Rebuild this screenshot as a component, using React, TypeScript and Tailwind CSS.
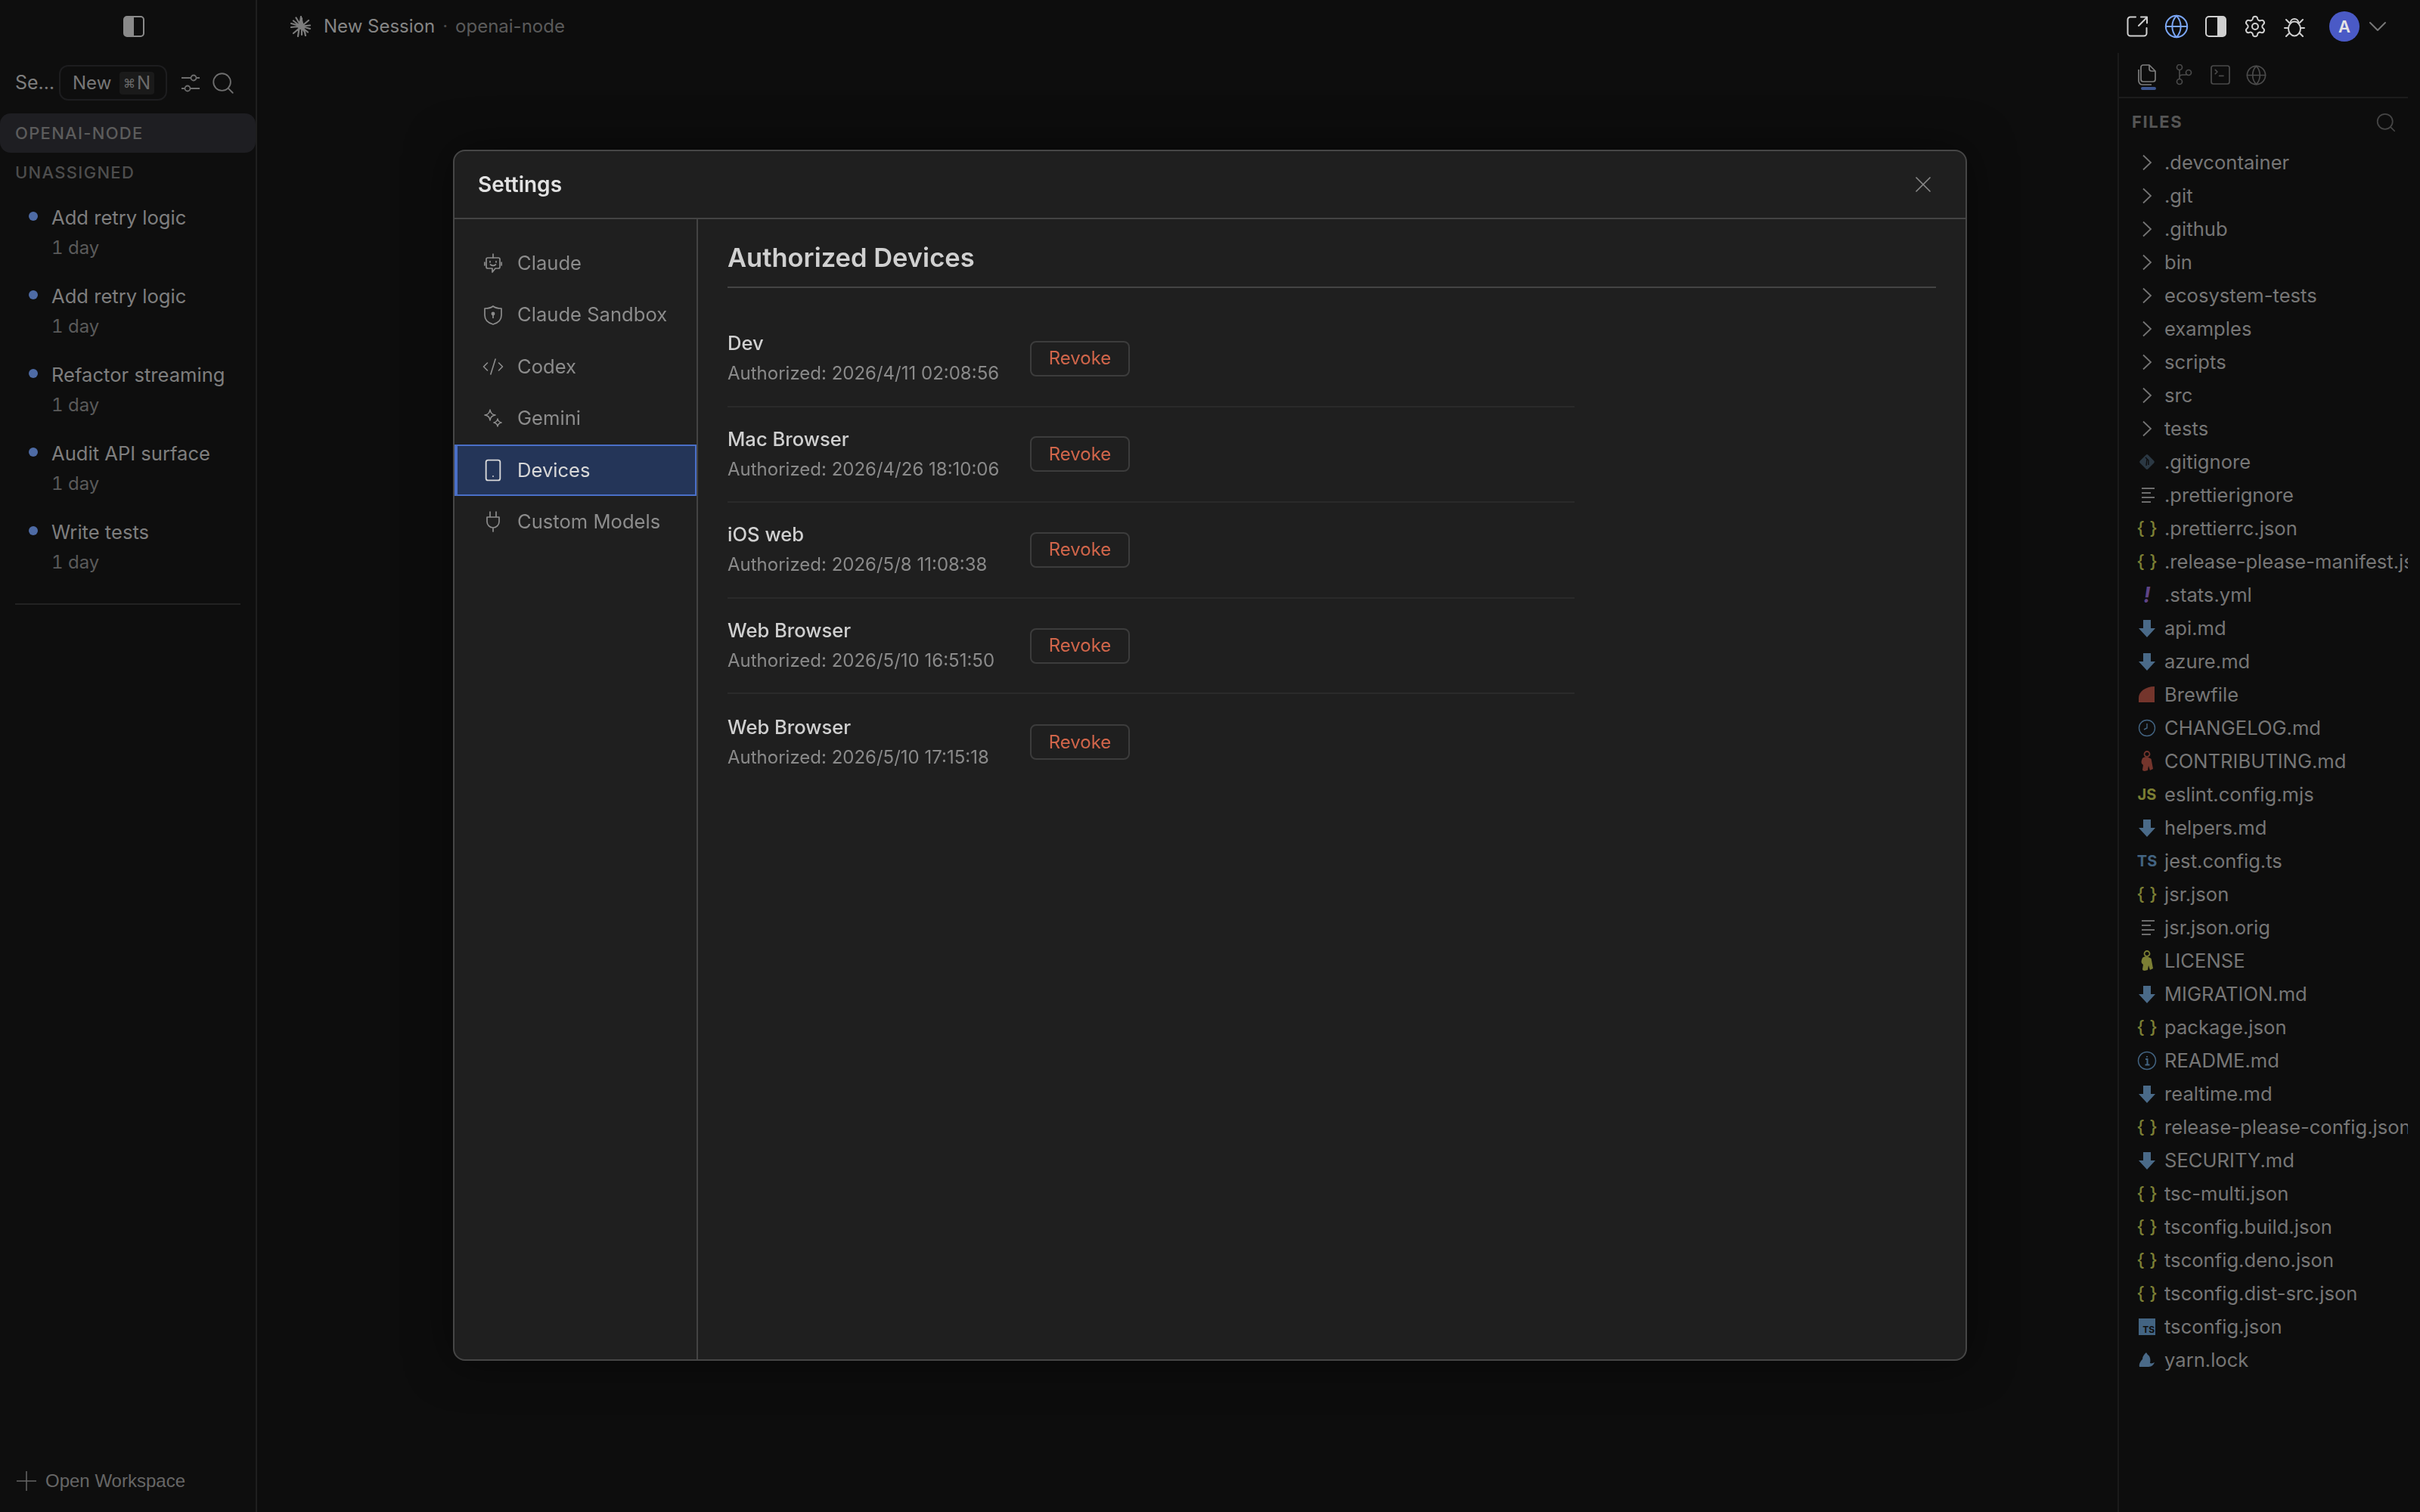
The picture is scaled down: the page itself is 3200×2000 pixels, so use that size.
import type { ReactNode } from "react";
import { ChevronDown, CodeXml, Globe, Search, Settings, Smartphone, SquareTerminal, X } from "lucide-react";

const SESSIONS = ["Add retry logic", "Add retry logic", "Refactor streaming", "Audit API surface", "Write tests"];

const DEVICES = [
  { name: "Dev", date: "Authorized: 2026/4/11 02:08:56" },
  { name: "Mac Browser", date: "Authorized: 2026/4/26 18:10:06" },
  { name: "iOS web", date: "Authorized: 2026/5/8 11:08:38" },
  { name: "Web Browser", date: "Authorized: 2026/5/10 16:51:50" },
  { name: "Web Browser", date: "Authorized: 2026/5/10 17:15:18" },
];

type FileKind = "folder" | "git" | "lines" | "json" | "yml" | "md" | "brew" | "clock" | "keyRed" | "keyYellow" | "js" | "ts" | "info" | "tsbox" | "yarn";

const FILES: [string, FileKind][] = [
  [".devcontainer", "folder"],
  [".git", "folder"],
  [".github", "folder"],
  ["bin", "folder"],
  ["ecosystem-tests", "folder"],
  ["examples", "folder"],
  ["scripts", "folder"],
  ["src", "folder"],
  ["tests", "folder"],
  [".gitignore", "git"],
  [".prettierignore", "lines"],
  [".prettierrc.json", "json"],
  [".release-please-manifest.json", "json"],
  [".stats.yml", "yml"],
  ["api.md", "md"],
  ["azure.md", "md"],
  ["Brewfile", "brew"],
  ["CHANGELOG.md", "clock"],
  ["CONTRIBUTING.md", "keyRed"],
  ["eslint.config.mjs", "js"],
  ["helpers.md", "md"],
  ["jest.config.ts", "ts"],
  ["jsr.json", "json"],
  ["jsr.json.orig", "lines"],
  ["LICENSE", "keyYellow"],
  ["MIGRATION.md", "md"],
  ["package.json", "json"],
  ["README.md", "info"],
  ["realtime.md", "md"],
  ["release-please-config.json", "json"],
  ["SECURITY.md", "md"],
  ["tsc-multi.json", "json"],
  ["tsconfig.build.json", "json"],
  ["tsconfig.deno.json", "json"],
  ["tsconfig.dist-src.json", "json"],
  ["tsconfig.json", "tsbox"],
  ["yarn.lock", "yarn"],
];

const KeyGlyph = ({ color }: { color: string }) => (
  <svg width="18" height="28" viewBox="0 0 18 28" fill={color}>
    <circle cx="9" cy="4.500" r="3.500" fill="none" stroke={color} strokeWidth="1.8" />
    <path d="M3 10c2-2 6-2 8-1l2 1c1 0 2 1 2 3l2 11-4 2-2-6-1 6-4 1c-2 0-3-1-3-2l1-6-2-2c-1-2 0-5 1-7z" />
  </svg>
);

const FileIcon = ({ kind }: { kind: FileKind }) => {
  switch (kind) {
    case "folder":
      return (
        <svg width="14" height="22" viewBox="0 0 14 22" fill="none" stroke="#747474" strokeWidth="1.800">
          <path d="M2 1.500l10 9.500-10 9.500" />
        </svg>
      );
    case "git":
      return (
        <svg width="24" height="24" viewBox="0 0 24 24">
          <rect x="4.500" y="4.500" width="15" height="15" rx="2" transform="rotate(45 12 12)" fill="#2b3843" />
          <path d="M10 6l4 4v6M12 8l-1 9" stroke="#0e0e0e" strokeWidth="1.400" fill="none" />
        </svg>
      );
    case "lines":
      return (
        <svg width="24" height="20" viewBox="0 0 24 20" fill="#6d6d6d">
          <rect x="5" y="0" width="17" height="2" />
          <rect x="5" y="6" width="12" height="2" />
          <rect x="5" y="12" width="17" height="2" />
          <rect x="5" y="18" width="12" height="2" />
        </svg>
      );
    case "json":
      return <span className="whitespace-pre text-[24px] font-medium leading-none text-[#7c7f34]">{"{ }"}</span>;
    case "yml":
      return <span className="text-[28px] font-bold italic leading-none text-[#5f4486]">!</span>;
    case "md":
      return (
        <svg width="22" height="23" viewBox="0 0 22 23" fill="#4a6a88">
          <path d="M6 0h10v11h6L11 23 0 11h6z" />
        </svg>
      );
    case "brew":
      return (
        <svg width="22" height="22" viewBox="0 0 22 22" fill="#74352c">
          <path d="M0 21V15C0 7 9 0 21 0v21z" />
        </svg>
      );
    case "clock":
      return (
        <svg width="24" height="24" viewBox="0 0 24 24" fill="none" stroke="#436482" strokeWidth="1.400">
          <circle cx="12" cy="12" r="10.500" />
          <path d="M12 6v6l-4 2" />
        </svg>
      );
    case "keyRed":
      return <KeyGlyph color="#74352c" />;
    case "keyYellow":
      return <KeyGlyph color="#7c7f34" />;
    case "js":
      return <span className="text-[20px] font-bold leading-none text-[#7c7f34]">JS</span>;
    case "ts":
      return <span className="text-[20px] font-bold leading-none text-[#436482]">TS</span>;
    case "info":
      return (
        <svg width="26" height="26" viewBox="0 0 26 26" fill="none" stroke="#436482" strokeWidth="1.500">
          <circle cx="13" cy="13" r="11.500" />
          <path d="M11 11h2.500v7M10.500 18.500h6M13 7v1.500" strokeWidth="2" />
        </svg>
      );
    case "tsbox":
      return (
        <span className="flex h-[22px] w-[22px] items-end justify-end bg-[#436482] pr-[1px] text-[12px] font-bold leading-[14px] text-[#0e0e0e]">
          TS
        </span>
      );
    case "yarn":
      return (
        <svg width="22" height="22" viewBox="0 0 22 22" fill="#4a6a88">
          <path d="M10 1l2 3c3 2 4 6 3 11 2 1 4 0 6-1-1 3-4 6-8 6H1c-1-4 2-8 4-10 0-4 2-6 5-9z" />
        </svg>
      );
  }
};

const PanelIcon = ({ side, color }: { side: "left" | "right"; color: string }) => (
  <svg width="28" height="28" viewBox="0 0 28 28" fill="none">
    <rect x="1" y="1" width="26" height="26" rx="4" stroke={color} strokeWidth="2" />
    {side === "left" ? (
      <path d="M5 1h9v26H5a4 4 0 0 1-4-4V5a4 4 0 0 1 4-4z" fill={color} />
    ) : (
      <path d="M16 1h7a4 4 0 0 1 4 4v18a4 4 0 0 1-4 4h-7z" fill={color} />
    )}
  </svg>
);

const StarIcon = () => (
  <svg width="28" height="28" viewBox="0 0 28 28" stroke="#7c7c7c" strokeWidth="2.200" strokeLinecap="round">
    <path d="M15 3v22M7.500 2.500l12 20M1 10l25 7M1 15l25-2.500M4 23l20-17M10 27l4-26M4 6.500l19 15M20 26l-5-20" />
    <circle cx="14" cy="13.500" r="4.500" fill="#7c7c7c" stroke="none" />
  </svg>
);

const SlidersIcon = () => (
  <svg width="24" height="24" viewBox="0 0 24 24" fill="none" stroke="#6e6e6e" strokeWidth="1.800">
    <path d="M0 5h12M20 5h4M0 19h4M12 19h12" />
    <circle cx="16" cy="5" r="3.500" />
    <circle cx="8" cy="19" r="3.500" />
  </svg>
);

const OpenIcon = () => (
  <svg width="28" height="28" viewBox="0 0 28 28" fill="none" stroke="#d0d0d0" strokeWidth="2" strokeLinecap="round" strokeLinejoin="round">
    <path d="M12 1.500H5A3.500 3.500 0 0 0 1.500 5v18A3.500 3.500 0 0 0 5 26.500h18a3.500 3.500 0 0 0 3.500-3.500v-7" />
    <path d="M16 13L27 2M19 1.500h8v8" />
  </svg>
);

const BugIcon = () => (
  <svg width="28" height="28" viewBox="0 0 28 28" fill="none" stroke="#d0d0d0" strokeWidth="2" strokeLinecap="round" strokeLinejoin="round">
    <ellipse cx="14" cy="17" rx="8" ry="9.500" />
    <path d="M8.500 10c0-8 11-8 11 0" />
    <path d="M1 16h5M22 16h5M3 5l4 4M25 5l-4 4M3 27l4-4M25 27l-4-4" />
  </svg>
);

const PlusThin = () => (
  <svg width="26" height="26" viewBox="0 0 26 26" stroke="#666666" strokeWidth="1.500">
    <path d="M13 0v26M0 13h26" />
  </svg>
);

const BotIcon = () => (
  <svg width="24" height="26" viewBox="0 0 24 26" fill="none" stroke="currentColor" strokeWidth="1.700" strokeLinecap="round" strokeLinejoin="round">
    <path d="M12 1v5M0.800 12v4M23.200 12v4" />
    <path d="M5 6h14a2 2 0 0 1 2 2v10a2 2 0 0 1-2 2h-4l-4 5v-5H5a2 2 0 0 1-2-2V8a2 2 0 0 1 2-2z" />
    <path d="M8 10.500v1.500M16 10.500v1.500M8.500 15c2 1.500 5 1.500 7 0" />
  </svg>
);

const ShieldIcon = () => (
  <svg width="24" height="26" viewBox="0 0 24 26" fill="none" stroke="currentColor" strokeWidth="1.700" strokeLinejoin="round">
    <path d="M12 1c2.500 2 6 3 11 3v9c0 6-4 10-11 12C5 23 1 19 1 13V4c5 0 8.500-1 11-3z" />
    <circle cx="12" cy="11" r="1.600" fill="currentColor" />
    <path d="M12 12v5" />
  </svg>
);

const GeminiIcon = () => (
  <svg width="24" height="24" viewBox="0 0 24 24" fill="none" stroke="currentColor" strokeWidth="1.600" strokeLinejoin="round">
    <path d="M8 1c.5 4 3 6.500 7 7-4 .5-6.500 3-7 7-.5-4-3-6.500-7-7 4-.5 6.500-3 7-7z" />
    <path d="M18 13c.3 2.500 2 4.200 5 5-3 .6-4.700 2.500-5 5-.3-2.500-2-4.400-5-5 3-.8 4.700-2.500 5-5z" />
  </svg>
);

const PlugIcon = () => (
  <svg width="24" height="28" viewBox="0 0 24 28" fill="none" stroke="currentColor" strokeWidth="1.700" strokeLinecap="round" strokeLinejoin="round">
    <path d="M8 1v7M16 1v7M4 8h16v6a8 8 0 0 1-16 0zM12 22v5" />
  </svg>
);

const FilesIcon = () => (
  <svg width="24" height="28" viewBox="0 0 24 28" fill="none" stroke="#7d7d7d" strokeWidth="1.700" strokeLinejoin="round">
    <path d="M1 7v15a5 5 0 0 0 5 5h12" />
    <path d="M10 1h5l8 8v11a3 3 0 0 1-3 3H7a3 3 0 0 1-3-3V4a3 3 0 0 1 3-3z" />
    <path d="M15 1v5a3 3 0 0 0 3 3h5" />
  </svg>
);

const BranchIcon = () => (
  <svg width="22" height="28" viewBox="0 0 22 28" fill="none" stroke="#4a4a4a" strokeWidth="1.700">
    <circle cx="5" cy="4" r="3.500" />
    <circle cx="5" cy="23" r="3.500" />
    <circle cx="17" cy="11" r="3.500" />
    <path d="M5 8v11M5 17c0-2 1-3 4-3h3c2 0 3-.5 3.500-1" />
  </svg>
);

const NAV: { label: string; icon: ReactNode; active?: boolean }[] = [
  { label: "Claude", icon: <BotIcon /> },
  { label: "Claude Sandbox", icon: <ShieldIcon /> },
  { label: "Codex", icon: <CodeXml size={30} strokeWidth={1.3} /> },
  { label: "Gemini", icon: <GeminiIcon /> },
  { label: "Devices", icon: <Smartphone size={32} strokeWidth={1.4} />, active: true },
  { label: "Custom Models", icon: <PlugIcon /> },
];

const Sidebar = () => (
  <aside className="flex h-full w-[340px] shrink-0 flex-col border-r-2 border-[#1f1f1f] bg-[#0e0e0e]">
    <div className="flex h-[70px] items-center justify-center pl-[15px]">
      <PanelIcon side="left" color="#8a8a8a" />
    </div>
    <div className="mt-[16px] flex h-[47px] items-center pl-[20px]">
      <span className="w-[58px] text-[25px] text-[#7e7e7e]">Se…</span>
      <div className="flex h-[47px] w-[143px] items-center justify-between rounded-[12px] border-2 border-[#1d1d1f] pl-[16px] pr-[15px] text-[24px] text-[#777777]">
        New
        <span className="flex h-[30px] w-[46px] items-center justify-center gap-[2px] rounded-[4px] bg-[#1a1a1a] text-[24px] text-[#6a6a6a]">
          <span className="text-[16px]">⌘</span>N
        </span>
      </div>
      <div className="ml-[19px]">
        <SlidersIcon />
      </div>
      <Search size={34} strokeWidth={1.300} className="ml-[14px] text-[#6e6e6e]" />
    </div>
    <div className="mt-[17px] flex h-[52px] w-[338px] items-center rounded-[14px] bg-[#1e1e22] pl-[20px] text-[22px] font-medium tracking-[1.300px] text-[#5c5c5c]">
      OPENAI-NODE
    </div>
    <div className="flex h-[52px] items-center pl-[20px] text-[22px] font-medium tracking-[1.300px] text-[#4d4d4d]">UNASSIGNED</div>
    <div className="mt-[2px]">
      {SESSIONS.map((title, index) => (
        <div key={index} className="flex h-[104px] flex-col justify-center pl-[68px]">
          <div className="relative h-[40px] text-[25.6px] leading-[40px] text-[#7e7e7e]">
            <span className="absolute left-[-30px] top-[12px] h-[12px] w-[12px] rounded-full bg-[#4e6ba5]" />
            {title}
          </div>
          <div className="h-[40px] text-[24px] leading-[40px] tabular-nums text-[#5a5a5a]">1 day</div>
        </div>
      ))}
    </div>
    <div className="mx-[20px] mt-[22px] h-[2px] bg-[#222222]" />
    <div className="mt-auto flex h-[82px] items-center gap-[12px] pl-[22px] font-['Liberation_Sans',sans-serif] text-[24px] text-[#666666]">
      <PlusThin />
      Open Workspace
    </div>
  </aside>
);

const TopBar = () => (
  <header className="flex h-[70px] shrink-0 items-center">
    <div className="ml-[44px]">
      <StarIcon />
    </div>
    <span className="ml-[16px] text-[24px] text-[#858585]">New Session</span>
    <span className="mx-[10px] text-[24px] text-[#4a4a4a]">·</span>
    <span className="text-[24px] text-[#5a5a5a]">openai-node</span>
    <div className="ml-auto flex items-center text-[#d0d0d0]">
      <OpenIcon />
      <Globe size={34} strokeWidth={1.400} className="ml-[21px] text-[#7aa5f5]" />
      <div className="ml-[21px]">
        <PanelIcon side="right" color="#d0d0d0" />
      </div>
      <Settings size={32} strokeWidth={1.500} className="ml-[22px]" />
      <div className="ml-[22px]">
        <BugIcon />
      </div>
      <span className="ml-[32px] flex h-[40px] w-[40px] items-center justify-center rounded-full bg-[#4a5ac6] text-[22px] font-semibold text-[#e4e4e4]">A</span>
      <ChevronDown size={40} strokeWidth={1.200} className="ml-[4px] mr-[36px] text-[#777777]" />
    </div>
  </header>
);

const FilesPanel = () => (
  <section className="flex h-full w-[400px] shrink-0 flex-col border-l-2 border-[#1a1a1a]">
    <div className="flex h-[60px] w-[382px] shrink-0 items-center border-b-2 border-[#1c1c1c] pl-[25px]">
      <div className="relative">
        <FilesIcon />
        <span className="absolute bottom-[-6px] left-[4px] h-[4px] w-[20px] rounded-full bg-[#3d5690]" />
      </div>
      <div className="ml-[26px]">
        <BranchIcon />
      </div>
      <SquareTerminal size={32} strokeWidth={1.300} className="ml-[21px] text-[#4a4a4a]" />
      <Globe size={29} strokeWidth={1.400} className="ml-[17px] text-[#4a4a4a]" />
    </div>
    <div className="flex h-[63px] w-[382px] shrink-0 items-center justify-between pl-[17px] pr-[14px]">
      <span className="text-[22px] font-bold tracking-[1.600px] text-[#555555]">FILES</span>
      <Search size={30} strokeWidth={1.400} className="text-[#454545]" />
    </div>
    <div className="w-[382px]">
      {FILES.map(([name, kind]) => (
        <div key={name} className="flex h-[44px] items-center overflow-hidden">
          <div className="ml-[24px] flex h-[44px] w-[26px] shrink-0 items-center justify-center">
            <FileIcon kind={kind} />
          </div>
          <span className="ml-[10px] whitespace-nowrap text-[25.6px] text-[#767676]">{name}</span>
        </div>
      ))}
    </div>
  </section>
);

const SettingsDialog = () => (
  <div className="fixed inset-0 flex items-center justify-center pb-[2px]">
    <div className="flex h-[1602px] w-[2002px] flex-col overflow-hidden rounded-[16px] border-2 border-[#464646] bg-[#1f1f1f] shadow-[0_0_60px_rgba(0,0,0,0.5)]">
      <div className="flex h-[90px] shrink-0 items-center justify-between border-b-2 border-[#434343] pl-[31px] pr-[38px]">
        <h2 className="text-[28px] font-semibold text-[#e2e2e2]">Settings</h2>
        <X size={36} strokeWidth={1.100} className="text-[#8a8a8a]" />
      </div>
      <div className="flex min-h-0 flex-1">
        <nav className="w-[322px] shrink-0 border-r-2 border-[#434343] pt-[24px]">
          {NAV.map((item) => (
            <div
              key={item.label}
              className={
                item.active
                  ? "flex h-[68.400px] items-center border-2 border-l-4 border-[#4a6fc8] bg-[#243558] text-[25.6px] text-[#d8d8d8]"
                  : "flex h-[68.400px] items-center border-2 border-transparent border-l-4 text-[25.6px] text-[#8c8c8c]"
              }
            >
              <span className="flex w-[79px] shrink-0 justify-center pl-[14px]">{item.icon}</span>
              {item.label}
            </div>
          ))}
        </nav>
        <div className="min-w-0 flex-1 px-[39px]">
          <h3 className="flex h-[91px] items-end border-b-2 border-[#444444] pb-[16px] text-[34.500px] font-semibold leading-[44px] text-[#d0d0d0]">
            Authorized Devices
          </h3>
          <div className="mt-[31px]">
            {DEVICES.map((device, index) => (
              <div key={index} className={index < DEVICES.length - 1 ? "flex h-[126.600px] w-[1120px] items-center border-b-2 border-[#2a2a2a]" : "flex h-[126.600px] w-[1120px] items-center"}>
                <div className="w-[400px]">
                  <div className="text-[25.6px] font-medium leading-[40px] text-[#d0d0d0]">{device.name}</div>
                  <div className="text-[24px] leading-[40px] text-[#8a8a8a]">{device.date}</div>
                </div>
                <button type="button" className="h-[47px] w-[132px] rounded-[8px] border-2 border-[#3c3c3c] text-[24px] text-[#d0654a]">
                  Revoke
                </button>
              </div>
            ))}
          </div>
        </div>
      </div>
    </div>
  </div>
);

export default function App() {
  return (
    <div className="relative flex h-[2000px] w-[3200px] overflow-hidden bg-[#0d0d0d] font-['Inter',sans-serif]">
      <Sidebar />
      <div className="flex min-w-0 flex-1 flex-col">
        <TopBar />
        <div className="flex min-h-0 flex-1 justify-end">
          <FilesPanel />
        </div>
      </div>
      <SettingsDialog />
    </div>
  );
}
